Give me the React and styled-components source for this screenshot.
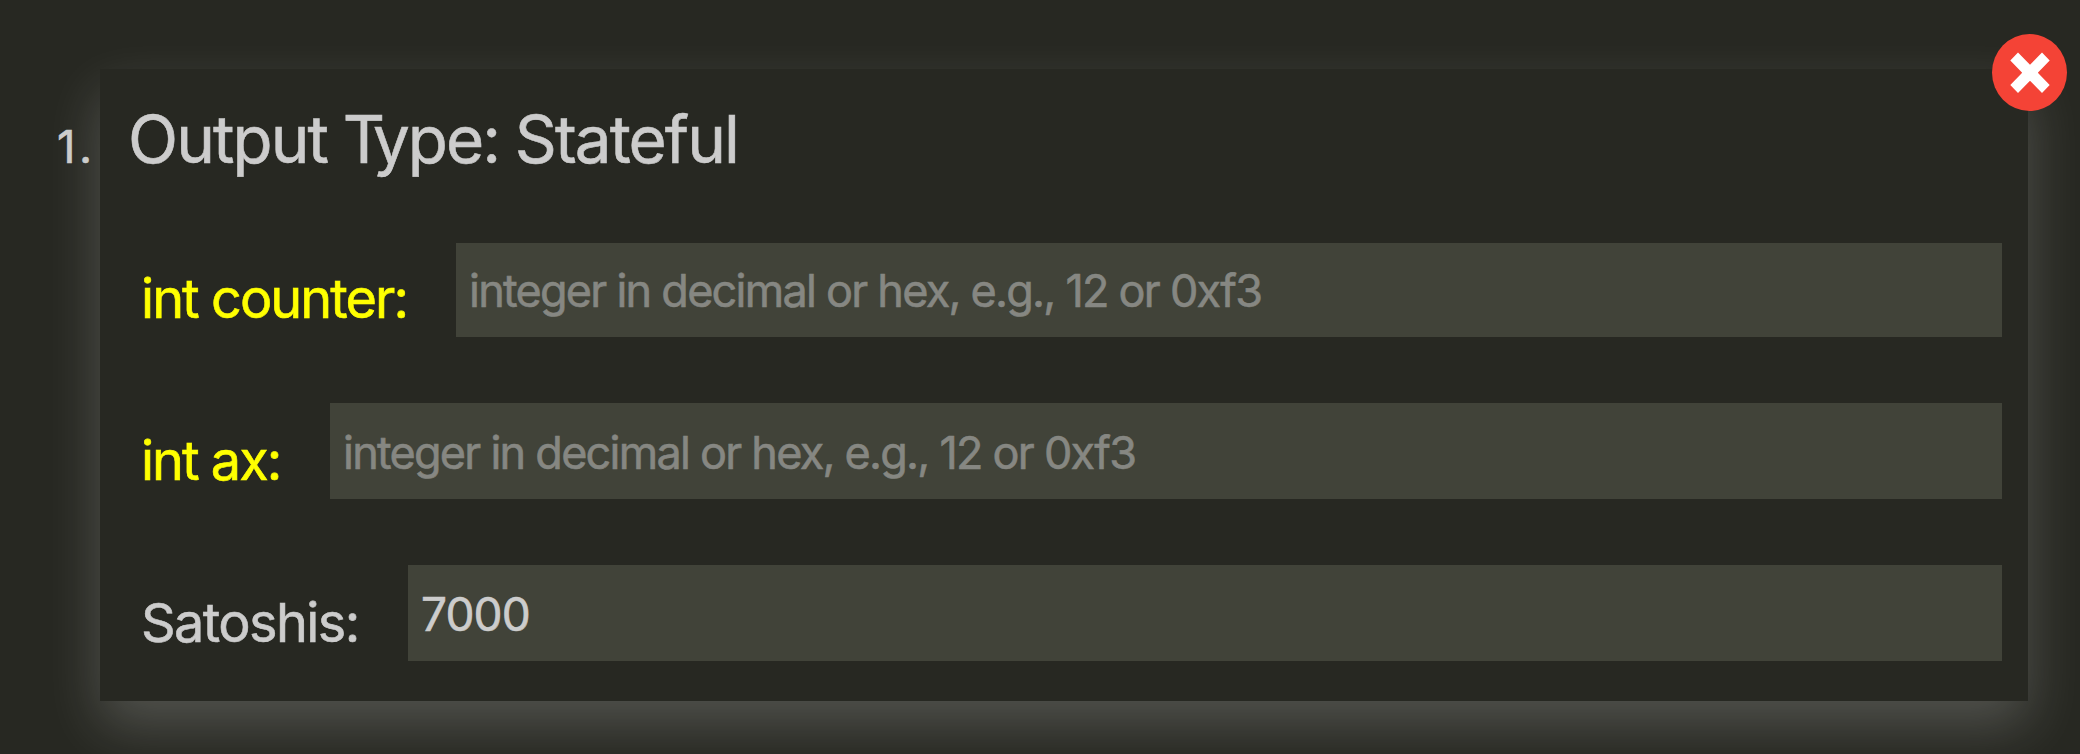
import React from "react";
import styled, { createGlobalStyle } from "styled-components";

const GlobalStyle = createGlobalStyle`
  *, *::before, *::after { box-sizing: border-box; }
  html, body { margin: 0; background: #272822; }
  body {
    width: 2080px;
    height: 754px;
    overflow: hidden;
    color: #cccccc;
    font-family: Inter, "Liberation Sans", sans-serif;
    font-weight: 400;
    -webkit-text-stroke: 0.6px currentColor;
  }
`;

const OutputList = styled.ol`
  margin: 0;
  padding: 69px 52px 53px 0;
  list-style: none;
`;

const OutputItem = styled.li`
  display: flex;
`;

const ItemNumber = styled.span`
  position: relative;
  z-index: 1;
  flex: 0 0 100px;
  padding: 51px 0 0 57px;
  font-size: 45.5px;
  line-height: 54px;
  letter-spacing: 3.5px;
`;

const Card = styled.section`
  position: relative;
  flex: 1;
  height: 632px;
  padding: 29px 26px 40px 28px;
  background: #272822;
  box-shadow: 0 24px 52px rgba(255, 255, 255, 0.2);
`;

const CloseButton = styled.button`
  position: absolute;
  top: -35px;
  right: -39px;
  width: 75px;
  height: 77px;
  padding: 0;
  border: 0;
  border-radius: 50%;
  background: #f44336;
  display: flex;
  align-items: center;
  justify-content: center;
  svg { display: block; }
`;

const Title = styled.h2`
  margin: 0;
  height: 145px;
  font-size: 65.5px;
  font-weight: 400;
  line-height: 83px;
  letter-spacing: -1.9px;
  word-spacing: -1px;
  white-space: nowrap;
`;

/* Pulls the capital T closer to the letter that follows it. */
const TightCap = styled.span`
  letter-spacing: -12px;
`;

const Fields = styled.div`
  display: flex;
  flex-direction: column;
  gap: 66px;
  padding-left: 13px;
`;

const Field = styled.label`
  display: flex;
  align-items: flex-end;
  height: ${(p) => p.$height}px;
`;

const FieldName = styled.span`
  flex: 0 0 ${(p) => p.$width}px;
  color: ${(p) => (p.$argument ? "#ffff00" : "#cccccc")};
  font-size: 54px;
  line-height: 77px;
  letter-spacing: ${(p) => p.$tracking}px;
  white-space: nowrap;
`;

const FieldInput = styled.input`
  flex: 1;
  min-width: 0;
  height: 100%;
  padding: ${(p) => p.$shift}px 13px 0;
  border: 0;
  border-radius: 0;
  outline: 0;
  background: #414339;
  color: #cccccc;
  font: 400 ${(p) => (p.$filled ? 46 : 45)}px Inter, "Liberation Sans", sans-serif;
  letter-spacing: ${(p) => (p.$filled ? -0.9 : -1.75)}px;
  &::placeholder { color: #868782; opacity: 1; }
`;

const hint = "integer in decimal or hex, e.g., 12 or 0xf3";

const fields = [
  { name: "int counter:", argument: true, width: 315, height: 94, shift: 1, tracking: -1.95 },
  { name: "int ax:", argument: true, width: 189, height: 96, shift: 2, tracking: -2 },
  { name: "Satoshis:", argument: false, width: 267, height: 96, shift: 2, tracking: -1.6, value: "7000" },
];

export default function App() {
  return (
    <>
      <GlobalStyle />
      <OutputList>
        <OutputItem>
          <ItemNumber>1.</ItemNumber>
          <Card>
            <CloseButton aria-label="Remove output">
              <svg width="40" height="42" viewBox="0 0 40 42" fill="#ffffff" preserveAspectRatio="none">
                <path d="M8 0.5 20 12.8 32 0.5 39.7 8.6 27.8 20.8 39.7 33 32 41 20 28.8 8 41 0.3 33 12.2 20.8 0.3 8.6Z" />
              </svg>
            </CloseButton>
            <Title>
              Output <TightCap>T</TightCap>ype: Stateful
            </Title>
            <Fields>
              {fields.map((f) => (
                <Field key={f.name} $height={f.height}>
                  <FieldName $argument={f.argument} $width={f.width} $tracking={f.tracking}>
                    {f.name}
                  </FieldName>
                  <FieldInput
                    type="text"
                    placeholder={hint}
                    defaultValue={f.value}
                    $filled={Boolean(f.value)}
                    $shift={f.shift}
                  />
                </Field>
              ))}
            </Fields>
          </Card>
        </OutputItem>
      </OutputList>
    </>
  );
}
